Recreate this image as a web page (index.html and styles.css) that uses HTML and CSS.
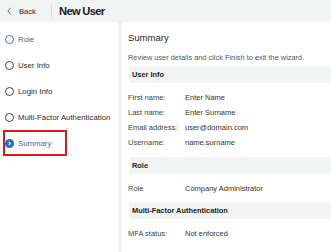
FILE: index.html
```html
<!DOCTYPE html>
<html>
<head>
<meta charset="utf-8">
<link rel="stylesheet" href="styles.css">
</head>
<body>
<div class="app">
  <header class="topbar">
    <div class="back"><svg class="chev" viewBox="0 0 6 10" width="5" height="8"><path d="M4.5 1 L1 5 L4.5 9" stroke="#444" stroke-width="1" fill="none"/></svg><span>Back</span></div>
    <div class="divider"></div>
    <div class="title">New User</div>
  </header>
  <div class="main">
    <nav class="sidebar">
      <div class="step active-blue"><span class="ring blue"></span><span>Role</span></div>
      <div class="step"><span class="ring"></span><span>User Info</span></div>
      <div class="step"><span class="ring"></span><span>Login Info</span></div>
      <div class="step"><span class="ring"></span><span>Multi-Factor Authentication</span></div>
      <div class="step current">
        <span class="dot"><svg viewBox="0 0 10 10" width="9" height="9"><circle cx="5" cy="5" r="5" fill="#1f6fc5"/><path d="M4.2 3.2 L6 5 L4.2 6.8" stroke="#fff" stroke-width="1.2" fill="none"/></svg></span>
        <span>Summary</span>
        <div class="highlight"></div>
      </div>
    </nav>
    <section class="content">
      <h1 class="heading">Summary</h1>
      <p class="desc">Review user details and click Finish to exit the wizard.</p>
      <div class="band">User Info</div>
      <div class="rows">
        <div class="row"><span class="label">First name:</span><span>Enter Name</span></div>
        <div class="row"><span class="label">Last name:</span><span>Enter Surname</span></div>
        <div class="row"><span class="label">Email address:</span><span>user@domain.com</span></div>
        <div class="row"><span class="label">Username:</span><span>name.surname</span></div>
      </div>
      <div class="band">Role</div>
      <div class="rows">
        <div class="row"><span class="label">Role</span><span>Company Administrator</span></div>
      </div>
      <div class="band">Multi-Factor Authentication</div>
      <div class="rows">
        <div class="row"><span class="label">MFA status:</span><span>Not enforced</span></div>
      </div>
    </section>
  </div>
</div>
</body>
</html>
```
FILE: styles.css
```css
* { box-sizing: border-box; }
html, body { margin: 0; padding: 0; }
body {
  width: 331px;
  height: 252px;
  overflow: hidden;
  background: #fff;
  font-family: "Liberation Sans", Arial, sans-serif;
  color: #333;
}
.app { display: flex; flex-direction: column; height: 252px; }
.topbar {
  height: 22px;
  background: #f2f3f3;
  display: flex;
  align-items: center;
  flex-shrink: 0;
}
.back {
  font-size: 7.6px;
  color: #2a2a2a;
  padding-left: 7px;
  width: 51px;
  display: flex;
  align-items: center;
  gap: 7px;
}
.chev { display: block; }
.divider { width: 1px; height: 15px; background: #dcdcdc; }
.title {
  font-size: 11.2px;
  font-weight: bold;
  color: #1a1a1a;
  margin-left: 7px;
  letter-spacing: -0.7px;
}
.main { display: flex; flex: 1; }
.sidebar {
  width: 119px;
  flex-shrink: 0;
  padding-top: 5px;
  display: flex;
  flex-direction: column;
}
.step {
  position: relative;
  height: 25.8px;
  display: flex;
  align-items: center;
  font-size: 7.8px;
  color: #2b2b2b;
  padding-left: 5px;
  gap: 4px;
}
.ring {
  width: 9px;
  height: 9px;
  border-radius: 50%;
  border: 1px solid #444;
  flex-shrink: 0;
}
.ring.blue { border-color: #3a7cc4; }
.active-blue { color: #2a6db5; }
.current { color: #2a6db5; }
.dot { width: 9px; height: 9px; display: flex; }
.highlight {
  position: absolute;
  left: 3px;
  top: 0px;
  width: 64px;
  height: 26px;
  border: 2px solid #e4141b;
}
.content {
  flex: 1;
  border-left: 2px solid #ececec;
  padding-left: 7px;
  padding-top: 10px;
}
.heading {
  margin: 0;
  font-size: 9.5px;
  font-weight: normal;
  color: #1e1e1e;
  height: 12px;
  line-height: 12px;
}
.desc {
  margin: 9px 0 3px 0;
  font-size: 7.4px;
  color: #555;
  line-height: 10px;
}
.band {
  margin-left: 1px;
  height: 17px;
  background: #f2f3f3;
  font-size: 7.4px;
  font-weight: bold;
  color: #222;
  display: flex;
  align-items: center;
  padding-left: 3px;
}
.rows { padding: 7px 0 6.5px 0; }
.row {
  display: flex;
  height: 15px;
  align-items: center;
  font-size: 7.5px;
  color: #333;
}
.label { width: 57px; color: #444; }
```
